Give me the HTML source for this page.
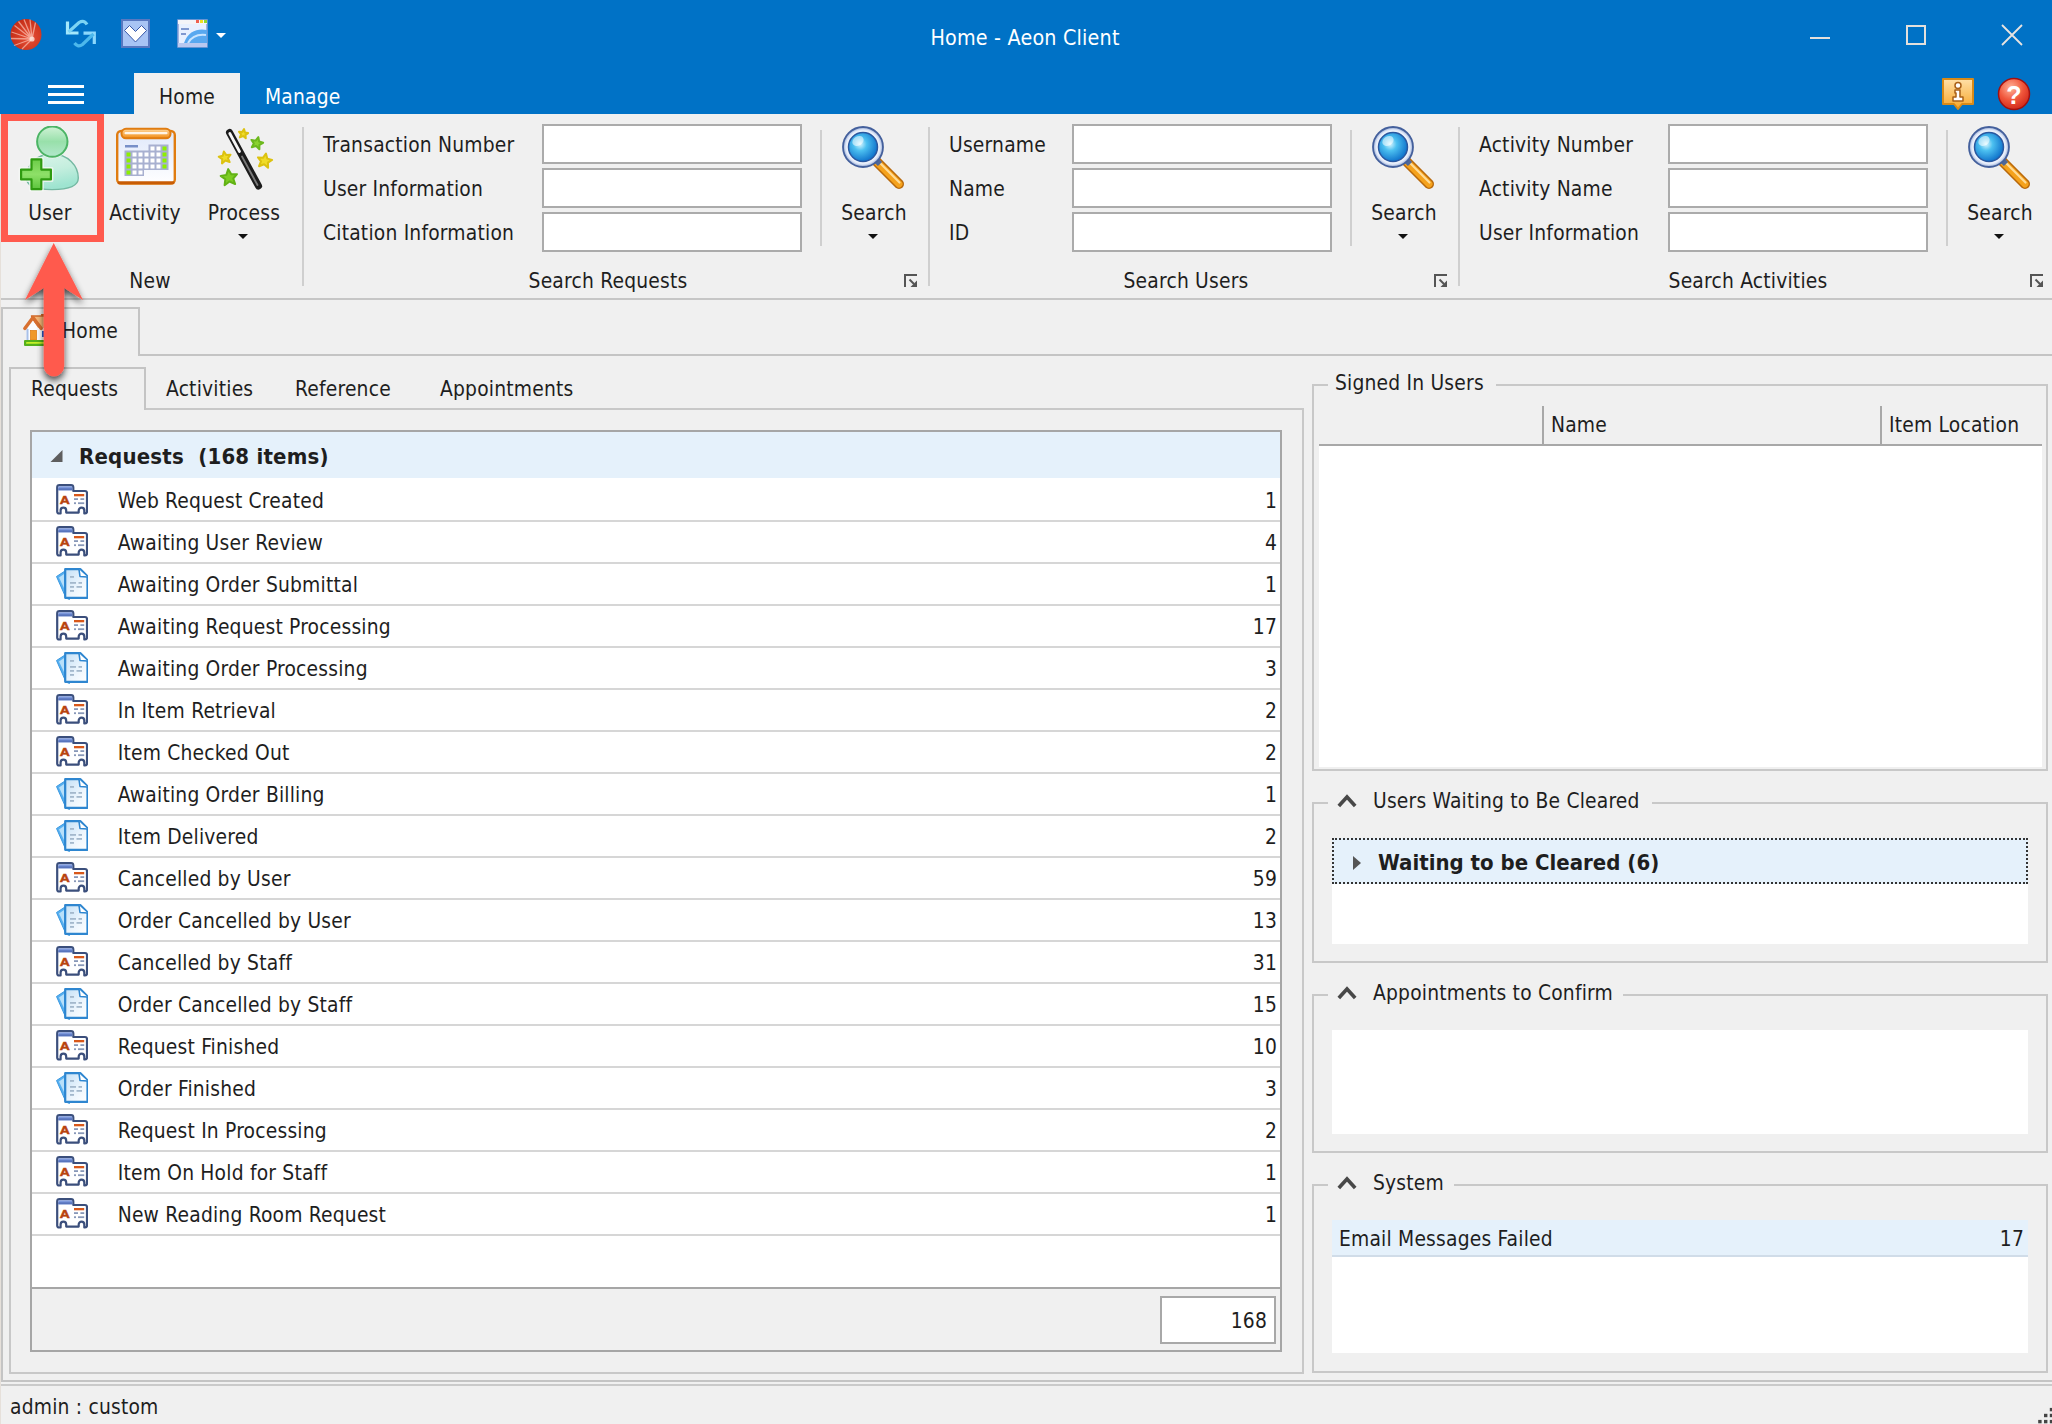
<!DOCTYPE html>
<html lang="en"><head><meta charset="utf-8"><title>Home - Aeon Client</title>
<style>
*{box-sizing:border-box}
html,body{margin:0;padding:0}
body{width:2052px;height:1424px;overflow:hidden;position:relative;background:#f0f0f0;font-family:"DejaVu Sans Condensed","DejaVu Sans","Liberation Sans",sans-serif;font-stretch:condensed;font-size:20.8px;letter-spacing:0.2px;color:#1e1e1e}
.a{position:absolute}
.t{position:absolute;white-space:nowrap;line-height:28px;height:28px}
.c{transform:translateX(-50%)}
.w{color:#fff}
#titlebar{left:0;top:0;width:2052px;height:114px;background:#0072c6}
#hometab{left:134px;top:73px;width:106px;height:42px;background:#f0f0f0}
.vsep{position:absolute;width:2px;background:#cfcfcf}
.inp{position:absolute;height:40px;width:260px;background:#fff;border:2px solid #ababab}
.hl{position:absolute;height:2px;background:#c4c4c4}
.dd{position:absolute;width:0;height:0;border-left:5px solid transparent;border-right:5px solid transparent;border-top:5px solid #111}
.row{position:absolute;left:32px;width:1248px;height:42px;background:#fff;border-bottom:2px solid #d6d6d6}
.row .ri{position:absolute;left:24px;top:4px}
.row .rn{position:absolute;left:85.700px;top:7px;line-height:28px;white-space:nowrap}
.row .rc{position:absolute;right:3px;top:7px;line-height:28px}
.frame{position:absolute;border:2px solid #c8c8c8}
.flabel{position:absolute;background:#f0f0f0;white-space:nowrap;line-height:28px;height:28px}
.white{position:absolute;background:#fff}

</style></head>
<body>
<svg width="0" height="0" style="position:absolute">
<defs>
<linearGradient id="gHead" x1="0" y1="0" x2="0" y2="1"><stop offset="0" stop-color="#d0f2d6"/><stop offset="0.5" stop-color="#98e0aa"/><stop offset="1" stop-color="#b2e8cc"/></linearGradient>
<linearGradient id="gBody" x1="0" y1="0" x2="0.300" y2="1"><stop offset="0" stop-color="#dcf5ea"/><stop offset="0.55" stop-color="#c4eede"/><stop offset="1" stop-color="#9ee4d0"/></linearGradient>
<linearGradient id="gPlus" x1="0" y1="0" x2="0" y2="1"><stop offset="0" stop-color="#6ccc48"/><stop offset="0.5" stop-color="#8ee068"/><stop offset="1" stop-color="#5cc43c"/></linearGradient>
<linearGradient id="gCalTop" x1="0" y1="0" x2="0" y2="1"><stop offset="0" stop-color="#ffd9a0"/><stop offset="1" stop-color="#f28c14"/></linearGradient>
<linearGradient id="gCalBody" x1="0" y1="0" x2="0" y2="1"><stop offset="0" stop-color="#dfe8fb"/><stop offset="1" stop-color="#ffffff"/></linearGradient>
<radialGradient id="gLens" cx="0.4" cy="0.4" r="0.65"><stop offset="0" stop-color="#d8f6ff"/><stop offset="0.35" stop-color="#4cc0f0"/><stop offset="1" stop-color="#0a6cc8"/></radialGradient>
<linearGradient id="gHandle" x1="0" y1="0" x2="0" y2="1"><stop offset="0" stop-color="#ffe0a0"/><stop offset="0.5" stop-color="#f5a21c"/><stop offset="1" stop-color="#c8720a"/></linearGradient>
<radialGradient id="gHelp" cx="0.4" cy="0.3" r="0.8"><stop offset="0" stop-color="#ffb49a"/><stop offset="0.5" stop-color="#f0553a"/><stop offset="1" stop-color="#c81e14"/></radialGradient>
<linearGradient id="gInfo" x1="0" y1="0" x2="0" y2="1"><stop offset="0" stop-color="#ffe0a8"/><stop offset="1" stop-color="#f6a62a"/></linearGradient>
<radialGradient id="gApp" cx="0.6" cy="0.6" r="0.7"><stop offset="0" stop-color="#e85038"/><stop offset="1" stop-color="#c02812"/></radialGradient>
<linearGradient id="gDoc" x1="0" y1="0" x2="1" y2="1"><stop offset="0" stop-color="#c4e0f6"/><stop offset="0.6" stop-color="#eef6fd"/><stop offset="1" stop-color="#ffffff"/></linearGradient>
<radialGradient id="gRim" cx="0.5" cy="0.5" r="0.5"><stop offset="0.700" stop-color="#ffffff"/><stop offset="0.860" stop-color="#e0e8f8"/><stop offset="1" stop-color="#8ea4d0"/></radialGradient>
<g id="ic-mag">
  <path d="M36 35L59 58" stroke="#b8680a" stroke-width="10" stroke-linecap="round"/>
  <path d="M37 36L59 58" stroke="#f5a21c" stroke-width="7" stroke-linecap="round"/>
  <path d="M38 35L59.500 56.500" stroke="#ffdc98" stroke-width="2.200" stroke-linecap="round"/>
  <path d="M33 31L40 38" stroke="#506898" stroke-width="6"/>
  <circle cx="23" cy="21" r="20" fill="url(#gRim)" stroke="#44609c" stroke-width="1.800"/>
  <circle cx="23" cy="21" r="14.500" fill="url(#gLens)" stroke="#2a58a0" stroke-width="1.500"/>
  <ellipse cx="18" cy="15" rx="6" ry="4.500" fill="#fff" opacity="0.55" transform="rotate(-30 18 15)"/>
</g>
<g id="ic-launch">
  <path d="M1 13V1H13" fill="none" stroke="#555" stroke-width="2"/>
  <path d="M5.500 5.500L10 10" fill="none" stroke="#555" stroke-width="2"/><path d="M13 6.500V13H6.500z" fill="#555"/>
</g>
<g id="ic-r">
  <path d="M1.200 3.500a2.300 2.300 0 0 1 2.300-2.300H15a2.300 2.300 0 0 1 2.300 2.300V7H29a2 2 0 0 1 2 2V27.500a2 2 0 0 1-2 2h-.700V26.500a2.800 2.800 0 0 0-5.600 0V28.600H10.200V26.500a2.800 2.800 0 0 0-5.600 0V29.500H3.200a2 2 0 0 1-2-2z" fill="#fff" stroke="#3b4f7c" stroke-width="2.200" stroke-linejoin="round"/>
  <rect x="2.300" y="2.300" width="14" height="4" fill="#7c98dc"/>
  <rect x="2.300" y="4.300" width="14" height="2" fill="#5874bc"/>
  <text x="0" y="0" transform="translate(3.800 20) scale(1.180 1)" font-family="Liberation Sans, sans-serif" font-weight="bold" font-size="11.800" fill="#b8420e" stroke="#b8420e" stroke-width="0.500">A</text>
  <rect x="18" y="10" width="10.200" height="2.300" fill="#d8581a"/>
  <rect x="18" y="14.200" width="4" height="1.800" fill="#8898b8"/><rect x="24.400" y="14.200" width="3.800" height="1.800" fill="#8898b8"/>
  <rect x="18" y="18.300" width="2" height="1.800" fill="#8898b8"/><rect x="22" y="18.300" width="6.200" height="1.800" fill="#8898b8"/>
</g>
<g id="ic-o">
  <path d="M0.500 8.500L9 3V24L13.500 31.500L10 30z" fill="#58b0f0" stroke="#3a98e0" stroke-width="1" stroke-linejoin="round"/>
  <path d="M3 9.500L8 6V20z" fill="#b8e0fa"/>
  <path d="M9.200 1.200H24.500L31.500 8.200V29.800H9.200z" fill="url(#gDoc)" stroke="#2e86d0" stroke-width="2.200" stroke-linejoin="round"/>
  <path d="M23 1.500L24 8.500L31.500 9" fill="#fff" stroke="#2e86d0" stroke-width="1.600" stroke-linejoin="round"/>
  <g fill="#a4b8cc"><rect x="14" y="8" width="4" height="1.800"/><rect x="14" y="14" width="6" height="1.800"/><rect x="22.500" y="14" width="3.500" height="1.800"/><rect x="14" y="18" width="4" height="1.800"/><rect x="20.500" y="18" width="5.500" height="1.800"/><rect x="14" y="22" width="4" height="1.800"/></g>
</g>
<g id="ic-chev"><path d="M1.800 13L10 4L18.200 13" fill="none" stroke="#484848" stroke-width="3.600"/></g>
</defs>
</svg>
<div id="titlebar" class="a"></div>
<!-- quick access icons -->
<svg class="a" style="left:8px;top:16px" width="220" height="38" viewBox="0 0 220 38">
  <circle cx="18" cy="18.500" r="15.500" fill="url(#gApp)"/>
  <g stroke="#ffd8cc" stroke-width="1.300" fill="none" opacity="0.600">
    <path d="M24 23L6.500 9.500M24 23L10.500 5.500M24 23L16 3.500M24 23L22 3.500M24 23L27.500 6.500M24 23L3.500 16M24 23L3 22.500M24 23L6 29.500M24 23L14 33"/>
  </g>
  <circle cx="24" cy="23" r="2.600" fill="#ffe8e0" opacity="0.800"/>
  <g fill="none" stroke-linecap="butt" stroke-linejoin="miter">
    <path d="M59.500 5.500V17H70.500" stroke="#a4e8fc" stroke-width="3.200"/>
    <path d="M60.500 16L71 6.500Q76 3.500 79 8.500" stroke="#7cd4f4" stroke-width="3.200"/>
    <path d="M75.500 17.200H86.300V28" stroke="#8cd8fc" stroke-width="3.200"/>
    <path d="M85.500 18L74.500 28.500Q70 32 66.500 27" stroke="#4cb8ec" stroke-width="3.200"/>
  </g>
  <rect x="114" y="4" width="27" height="27" fill="#a8c4f4" stroke="#5878c0" stroke-width="2"/>
  <path d="M116.500 14.500l5-5 6 6 6-6 5 5-11 11.500z" fill="#fff" stroke="#3858a8" stroke-width="1"/>
  <rect x="170" y="4" width="29" height="27" fill="#e8f0ff" stroke="#88a0d8" stroke-width="1.5"/>
  <rect x="170" y="4" width="29" height="4" fill="#f4f4f8"/>
  <rect x="188" y="4" width="3" height="3" fill="#f06050"/><rect x="192" y="4" width="3" height="3" fill="#f0e020"/><rect x="196" y="4" width="3" height="3" fill="#90d830"/>
  <path d="M176 27c4-12 14-15 23-13v13z" fill="#58a8f0"/>
  <path d="M180 27c4-7 10-9 18-8" fill="none" stroke="#c8e4ff" stroke-width="2"/>
  <rect x="173" y="12" width="8" height="2" fill="#8098d0"/><rect x="173" y="17" width="5" height="2" fill="#8098d0"/>
  <rect x="170" y="27" width="29" height="4" fill="#b8c8f0"/>
  <path d="M208 17h10l-5 5z" fill="#fff"/>
</svg>
<div class="t w c" style="left:1025px;top:23.500px;font-size:21.300px">Home - Aeon Client</div>
<!-- window buttons -->
<div class="a" style="left:1810px;top:37px;width:20px;height:2px;background:#e4e0dc"></div>
<div class="a" style="left:1906px;top:25px;width:20px;height:20px;border:2px solid #e4e0dc"></div>
<svg class="a" style="left:2001px;top:24px" width="22" height="22" viewBox="0 0 22 22"><path d="M1 1L21 21M21 1L1 21" stroke="#e8e4e0" stroke-width="1.8" fill="none"/></svg>
<!-- ribbon tabs -->
<div class="a" style="left:48px;top:85px;width:36px;height:3px;background:#fff"></div>
<div class="a" style="left:48px;top:93px;width:36px;height:3px;background:#fff"></div>
<div class="a" style="left:48px;top:101px;width:36px;height:3px;background:#fff"></div>
<div id="hometab" class="a"></div>
<div class="t" style="left:159px;top:83px">Home</div>
<div class="t w" style="left:265px;top:83px">Manage</div>
<!-- info + help -->
<svg class="a" style="left:1941px;top:77px" width="34" height="34" viewBox="0 0 34 34">
  <path d="M2 2h30v25H21l-4 5-4-5H2z" fill="url(#gInfo)" stroke="#d88a18" stroke-width="2" stroke-linejoin="round"/>
  <circle cx="17" cy="8.500" r="3" fill="#fff" stroke="#a86018" stroke-width="1.5"/>
  <path d="M14 13h5v7h3v4H12v-4h3v-4h-1z" fill="#fff" stroke="#a86018" stroke-width="1.5" stroke-linejoin="round"/>
</svg>
<svg class="a" style="left:1997px;top:77px" width="34" height="34" viewBox="0 0 34 34">
  <circle cx="17" cy="17" r="15.500" fill="url(#gHelp)" stroke="#a01010" stroke-width="1.5"/>
  <text x="17" y="26.500" text-anchor="middle" font-family="Liberation Sans, sans-serif" font-weight="bold" font-size="25" fill="#fff">?</text>
</svg>
<!-- ribbon body -->
<div class="hl" style="left:0;top:298px;width:2052px;background:#c6c6c6"></div>
<div class="vsep" style="left:302px;top:127px;height:159px"></div>
<div class="vsep" style="left:928px;top:127px;height:159px"></div>
<div class="vsep" style="left:1458px;top:127px;height:159px"></div>
<div class="vsep" style="left:820px;top:130px;height:116px"></div>
<div class="vsep" style="left:1350px;top:130px;height:116px"></div>
<div class="vsep" style="left:1946px;top:130px;height:116px"></div>
<!-- New group icons -->
<svg class="a" style="left:18px;top:126px" width="64" height="66" viewBox="0 0 64 66">
  <path d="M8.500 52C8.500 38 19 28 34 28C50 28 60.300 40 60.300 52C60.300 59.500 52 63.600 34 63.600C16 63.600 8.500 59.500 8.500 52Z" fill="url(#gBody)" stroke="#74b8a2" stroke-width="1.400"/>
  <circle cx="34.300" cy="15.600" r="16.800" fill="#f4f8f4" opacity="0.8"/>
  <circle cx="34.300" cy="15.600" r="15.200" fill="url(#gHead)" stroke="#4cb465" stroke-width="2"/>
  <path d="M12.500 32.400H24.300V42.600H33.900V54.400H24.300V64.200H12.500V54.400H2.100V42.600H12.500Z" fill="#f4f8f4" stroke="#f4f8f4" stroke-width="3" stroke-linejoin="round" opacity="0.8"/>
  <path d="M13.500 33.400H23.300V43.600H32.900V53.400H23.300V63.200H13.500V53.400H3.100V43.600H13.500Z" fill="url(#gPlus)" stroke="#2f9a10" stroke-width="2.200" stroke-linejoin="round"/>
</svg>
<svg class="a" style="left:114px;top:126px" width="64" height="64" viewBox="0 0 64 64">
  <rect x="3.200" y="5" width="57.600" height="52.500" rx="4" fill="url(#gCalBody)" stroke="#e07c10" stroke-width="2.400"/>
  <path d="M5 56.800H59" stroke="#c85c04" stroke-width="3" stroke-linecap="round"/>
  <rect x="7.500" y="2.800" width="49" height="9.500" rx="4.500" fill="url(#gCalTop)" stroke="#e07c10" stroke-width="2"/>
  <rect x="10.500" y="6" width="43" height="2.200" rx="1" fill="#fff" opacity="0.85"/>
  <rect x="11" y="19" width="13" height="2.500" fill="#7890c8"/>
  <path d="M10.500 24.500h24v-6h20v25.500H30v6H10.500z" fill="#a8b0d0"/>
  <g fill="#fff">
    <rect x="36.500" y="20.500" width="4" height="4"/><rect x="42.500" y="20.500" width="4" height="4"/>
    <rect x="18.500" y="26.500" width="4" height="4"/><rect x="24.500" y="26.500" width="4" height="4"/><rect x="30.500" y="26.500" width="4" height="4"/><rect x="36.500" y="26.500" width="4" height="4"/><rect x="42.500" y="26.500" width="4" height="4"/>
    <rect x="18.500" y="32.500" width="4" height="4"/><rect x="24.500" y="32.500" width="4" height="4"/><rect x="30.500" y="32.500" width="4" height="4"/><rect x="36.500" y="32.500" width="4" height="4"/><rect x="42.500" y="32.500" width="4" height="4"/>
    <rect x="18.500" y="38.500" width="4" height="4"/><rect x="24.500" y="38.500" width="4" height="4"/><rect x="30.500" y="38.500" width="4" height="4"/><rect x="36.500" y="38.500" width="4" height="4"/><rect x="42.500" y="38.500" width="4" height="4"/>
    <rect x="18.500" y="44.500" width="4" height="4"/><rect x="24.500" y="44.500" width="4" height="4"/>
  </g>
  <g fill="#8cf000">
    <rect x="48.500" y="20.500" width="4" height="4"/><rect x="48.500" y="26.500" width="4" height="4"/><rect x="48.500" y="32.500" width="4" height="4"/><rect x="48.500" y="38.500" width="4" height="4"/>
    <rect x="12.500" y="26.500" width="4" height="4"/><rect x="12.500" y="32.500" width="4" height="4"/><rect x="12.500" y="38.500" width="4" height="4"/><rect x="12.500" y="44.500" width="4" height="4"/>
  </g>
</svg>
<svg class="a" style="left:212px;top:126px" width="64" height="66" viewBox="0 0 64 66">
  <path d="M17.500 6.500L46.500 60" stroke="#1c1c1c" stroke-width="7" stroke-linecap="round"/>
  <path d="M17.800 7.500L27.500 25.500" stroke="#f6f6f6" stroke-width="2.800" stroke-linecap="round"/>
  <path d="M30 30.500L45.500 59" stroke="#7a7a7a" stroke-width="1.800" stroke-linecap="round"/>
  <g stroke-linejoin="round" stroke-width="2">
  <path d="M0-4.600L1.400-1.500 4.600-1.300 2.200 0.900 3 4.200 0 2.400-3 4.200-2.200 0.900-4.600-1.300-1.400-1.500z" transform="translate(31.400 7.700) rotate(8)" fill="#f0dc28" stroke="#dcc210"/>
  <path d="M0-6L1.800-2 6-1.700 2.900 1.200 3.900 5.400 0 3.100-3.900 5.400-2.900 1.200-6-1.700-1.800-2z" transform="translate(44.900 17) rotate(14)" fill="#8ad22e" stroke="#6cb81c"/>
  <path d="M0-6L1.800-2 6-1.700 2.900 1.200 3.900 5.400 0 3.100-3.900 5.400-2.900 1.200-6-1.700-1.800-2z" transform="translate(12.900 31.400) rotate(-10)" fill="#f0dc28" stroke="#dcc210"/>
  <path d="M0-7.200L2.200-2.400 7.200-2 3.500 1.400 4.600 6.500 0 3.700-4.600 6.500-3.500 1.400-7.200-2-2.200-2.400z" transform="translate(52.700 34.600) rotate(10)" fill="#f0dc28" stroke="#dcc210"/>
  <path d="M0-8.200L2.500-2.700 8.200-2.300 4 1.600 5.300 7.400 0 4.200-5.300 7.400-4 1.600-8.200-2.300-2.500-2.700z" transform="translate(17.100 51.300) rotate(-6)" fill="#7ccc22" stroke="#62b214"/>
  </g>
</svg>
<div class="t c" style="left:50px;top:199px">User</div>
<div class="t c" style="left:145px;top:199px">Activity</div>
<div class="t c" style="left:244px;top:199px">Process</div>
<div class="dd" style="left:238px;top:234px"></div>
<div class="t c" style="left:150px;top:267px">New</div>
<!-- Search Requests -->
<div class="t" style="left:323px;top:131px">Transaction Number</div>
<div class="t" style="left:323px;top:175px">User Information</div>
<div class="t" style="left:323px;top:219px">Citation Information</div>
<div class="inp" style="left:542px;top:124px"></div>
<div class="inp" style="left:542px;top:168px"></div>
<div class="inp" style="left:542px;top:212px"></div>
<svg class="a" style="left:840px;top:126px" width="66" height="66" viewBox="0 0 66 66"><use href="#ic-mag"/></svg>
<div class="t c" style="left:874px;top:199px">Search</div>
<div class="dd" style="left:868px;top:234px"></div>
<svg class="a" style="left:904px;top:274px" width="14" height="14" viewBox="0 0 14 14"><use href="#ic-launch"/></svg>
<div class="t c" style="left:608px;top:267px">Search Requests</div>
<!-- Search Users -->
<div class="t" style="left:949px;top:131px">Username</div>
<div class="t" style="left:949px;top:175px">Name</div>
<div class="t" style="left:949px;top:219px">ID</div>
<div class="inp" style="left:1072px;top:124px"></div>
<div class="inp" style="left:1072px;top:168px"></div>
<div class="inp" style="left:1072px;top:212px"></div>
<svg class="a" style="left:1370px;top:126px" width="66" height="66" viewBox="0 0 66 66"><use href="#ic-mag"/></svg>
<div class="t c" style="left:1404px;top:199px">Search</div>
<div class="dd" style="left:1398px;top:234px"></div>
<svg class="a" style="left:1434px;top:274px" width="14" height="14" viewBox="0 0 14 14"><use href="#ic-launch"/></svg>
<div class="t c" style="left:1186px;top:267px">Search Users</div>
<!-- Search Activities -->
<div class="t" style="left:1479px;top:131px">Activity Number</div>
<div class="t" style="left:1479px;top:175px">Activity Name</div>
<div class="t" style="left:1479px;top:219px">User Information</div>
<div class="inp" style="left:1668px;top:124px"></div>
<div class="inp" style="left:1668px;top:168px"></div>
<div class="inp" style="left:1668px;top:212px"></div>
<svg class="a" style="left:1966px;top:126px" width="66" height="66" viewBox="0 0 66 66"><use href="#ic-mag"/></svg>
<div class="t c" style="left:2000px;top:199px">Search</div>
<div class="dd" style="left:1994px;top:234px"></div>
<svg class="a" style="left:2030px;top:274px" width="14" height="14" viewBox="0 0 14 14"><use href="#ic-launch"/></svg>
<div class="t c" style="left:1748px;top:267px">Search Activities</div>
<!-- document tab -->
<div class="a" style="left:1px;top:307px;width:139px;height:49px;border:2px solid #c4c4c4;border-bottom:none"></div>
<div class="hl" style="left:138px;top:354px;width:1914px"></div>
<div class="a" style="left:1px;top:354px;width:2px;height:1026px;background:#c4c4c4"></div>
<svg class="a" style="left:22px;top:312px" width="38" height="36" viewBox="0 0 38 36">
  <rect x="19" y="2" width="3.500" height="4" fill="#d06828"/>
  <path d="M9.500 4H28L34.500 17H16Z" fill="#f6b878" stroke="#d06828" stroke-width="1.500" stroke-linejoin="round"/>
  <rect x="4.500" y="16" width="27.500" height="12.500" fill="#fbfdff"/>
  <rect x="4.500" y="16" width="2" height="12.500" fill="#a8c0e8"/><rect x="30" y="16" width="2" height="12.500" fill="#a8c0e8"/>
  <path d="M5 17L11 8.500L17 17Z" fill="#fbfdff"/>
  <path d="M2.800 16.500L11 5.500L19.200 16.500" fill="none" stroke="#d87030" stroke-width="3.400" stroke-linejoin="round" stroke-linecap="round"/>
  <rect x="8.500" y="18.500" width="6" height="9.500" fill="#f09828" stroke="#e08018" stroke-width="0.800"/>
  <rect x="20" y="19" width="6" height="6" fill="#2860d0"/>
  <rect x="2" y="28" width="32.500" height="6" rx="1" fill="#54b01c"/>
  <rect x="4" y="30" width="28" height="1.800" rx="0.900" fill="#c4f028"/>
</svg>
<div class="t" style="left:62px;top:317px">Home</div>
<!-- inner tab control -->
<div class="frame" style="left:9px;top:408px;width:1295px;height:966px"></div>
<div class="a" style="left:9px;top:367px;width:137px;height:43px;border:2px solid #c4c4c4;border-bottom:none;background:#f0f0f0"></div>
<div class="t" style="left:31px;top:375px">Requests</div>
<div class="t" style="left:166px;top:375px">Activities</div>
<div class="t" style="left:295px;top:375px">Reference</div>
<div class="t" style="left:440px;top:375px">Appointments</div>
<!-- grid -->
<div class="a" style="left:30px;top:430px;width:1252px;height:922px;border:2px solid #a6a6a6;background:#fff"></div>
<div class="a" style="left:32px;top:432px;width:1248px;height:46px;background:#e5f1fb"></div>
<svg class="a" style="left:50px;top:449px" width="14" height="14" viewBox="0 0 14 14"><path d="M12.500 1V13H0.500z" fill="#5e5e5e"/></svg>
<div class="t" style="left:79px;top:443px;font-weight:bold;font-size:22px">Requests&nbsp; (168 items)</div>
<div class="a" style="left:32px;top:1287px;width:1248px;height:63px;background:#f0f0f0;border-top:2px solid #a6a6a6"></div>
<div class="a" style="left:1160px;top:1296px;width:116px;height:48px;background:#fff;border:2px solid #a8a8a8"></div>
<div class="t" style="left:1160px;width:107px;top:1307px;text-align:right">168</div>
<div class="row" style="top:480px"><svg class="ri" width="32" height="32" viewBox="0 0 32 32"><use href="#ic-r"/></svg><span class="rn">Web Request Created</span><span class="rc">1</span></div>
<div class="row" style="top:522px"><svg class="ri" width="32" height="32" viewBox="0 0 32 32"><use href="#ic-r"/></svg><span class="rn">Awaiting User Review</span><span class="rc">4</span></div>
<div class="row" style="top:564px"><svg class="ri" width="32" height="32" viewBox="0 0 32 32"><use href="#ic-o"/></svg><span class="rn">Awaiting Order Submittal</span><span class="rc">1</span></div>
<div class="row" style="top:606px"><svg class="ri" width="32" height="32" viewBox="0 0 32 32"><use href="#ic-r"/></svg><span class="rn">Awaiting Request Processing</span><span class="rc">17</span></div>
<div class="row" style="top:648px"><svg class="ri" width="32" height="32" viewBox="0 0 32 32"><use href="#ic-o"/></svg><span class="rn">Awaiting Order Processing</span><span class="rc">3</span></div>
<div class="row" style="top:690px"><svg class="ri" width="32" height="32" viewBox="0 0 32 32"><use href="#ic-r"/></svg><span class="rn">In Item Retrieval</span><span class="rc">2</span></div>
<div class="row" style="top:732px"><svg class="ri" width="32" height="32" viewBox="0 0 32 32"><use href="#ic-r"/></svg><span class="rn">Item Checked Out</span><span class="rc">2</span></div>
<div class="row" style="top:774px"><svg class="ri" width="32" height="32" viewBox="0 0 32 32"><use href="#ic-o"/></svg><span class="rn">Awaiting Order Billing</span><span class="rc">1</span></div>
<div class="row" style="top:816px"><svg class="ri" width="32" height="32" viewBox="0 0 32 32"><use href="#ic-o"/></svg><span class="rn">Item Delivered</span><span class="rc">2</span></div>
<div class="row" style="top:858px"><svg class="ri" width="32" height="32" viewBox="0 0 32 32"><use href="#ic-r"/></svg><span class="rn">Cancelled by User</span><span class="rc">59</span></div>
<div class="row" style="top:900px"><svg class="ri" width="32" height="32" viewBox="0 0 32 32"><use href="#ic-o"/></svg><span class="rn">Order Cancelled by User</span><span class="rc">13</span></div>
<div class="row" style="top:942px"><svg class="ri" width="32" height="32" viewBox="0 0 32 32"><use href="#ic-r"/></svg><span class="rn">Cancelled by Staff</span><span class="rc">31</span></div>
<div class="row" style="top:984px"><svg class="ri" width="32" height="32" viewBox="0 0 32 32"><use href="#ic-o"/></svg><span class="rn">Order Cancelled by Staff</span><span class="rc">15</span></div>
<div class="row" style="top:1026px"><svg class="ri" width="32" height="32" viewBox="0 0 32 32"><use href="#ic-r"/></svg><span class="rn">Request Finished</span><span class="rc">10</span></div>
<div class="row" style="top:1068px"><svg class="ri" width="32" height="32" viewBox="0 0 32 32"><use href="#ic-o"/></svg><span class="rn">Order Finished</span><span class="rc">3</span></div>
<div class="row" style="top:1110px"><svg class="ri" width="32" height="32" viewBox="0 0 32 32"><use href="#ic-r"/></svg><span class="rn">Request In Processing</span><span class="rc">2</span></div>
<div class="row" style="top:1152px"><svg class="ri" width="32" height="32" viewBox="0 0 32 32"><use href="#ic-r"/></svg><span class="rn">Item On Hold for Staff</span><span class="rc">1</span></div>
<div class="row" style="top:1194px"><svg class="ri" width="32" height="32" viewBox="0 0 32 32"><use href="#ic-r"/></svg><span class="rn">New Reading Room Request</span><span class="rc">1</span></div>
<!-- Signed In Users -->
<div class="frame" style="left:1312px;top:384px;width:736px;height:387px"></div>
<div class="flabel" style="left:1328px;top:369px;width:168px;padding-left:7px">Signed In Users</div>
<div class="white" style="left:1319px;top:446px;width:723px;height:321px"></div>
<div class="hl" style="left:1319px;top:444px;width:723px;background:#a8a8a8"></div>
<div class="vsep" style="left:1542px;top:406px;height:39px;background:#a8a8a8"></div>
<div class="vsep" style="left:1880px;top:406px;height:39px;background:#a8a8a8"></div>
<div class="t" style="left:1551px;top:411px">Name</div>
<div class="t" style="left:1889px;top:411px">Item Location</div>
<!-- Users Waiting -->
<div class="frame" style="left:1312px;top:802px;width:736px;height:161px"></div>
<div class="flabel" style="left:1328px;top:787px;width:324px"></div>
<svg class="a" style="left:1337px;top:793px" width="20" height="16" viewBox="0 0 20 16"><use href="#ic-chev"/></svg>
<div class="t" style="left:1373px;top:787px">Users Waiting to Be Cleared</div>
<div class="white" style="left:1332px;top:838px;width:696px;height:106px"></div>
<div class="a" style="left:1332px;top:838px;width:696px;height:46px;background:#e5f1fb;border:2px dotted #333"></div>
<svg class="a" style="left:1351.500px;top:855px" width="10" height="16" viewBox="0 0 10 16"><path d="M1 1L9 8L1 15z" fill="#555"/></svg>
<div class="t" style="left:1378px;top:849px;font-weight:bold;font-size:22px;letter-spacing:0">Waiting to be Cleared (6)</div>
<!-- Appointments -->
<div class="frame" style="left:1312px;top:994px;width:736px;height:159px"></div>
<div class="flabel" style="left:1328px;top:979px;width:295px"></div>
<svg class="a" style="left:1337px;top:985px" width="20" height="16" viewBox="0 0 20 16"><use href="#ic-chev"/></svg>
<div class="t" style="left:1373px;top:979px">Appointments to Confirm</div>
<div class="white" style="left:1332px;top:1030px;width:696px;height:104px"></div>
<!-- System -->
<div class="frame" style="left:1312px;top:1184px;width:736px;height:189px"></div>
<div class="flabel" style="left:1328px;top:1169px;width:126px"></div>
<svg class="a" style="left:1337px;top:1175px" width="20" height="16" viewBox="0 0 20 16"><use href="#ic-chev"/></svg>
<div class="t" style="left:1373px;top:1169px">System</div>
<div class="white" style="left:1332px;top:1220px;width:696px;height:133px"></div>
<div class="a" style="left:1332px;top:1220px;width:696px;height:37px;background:#e5f1fb;border-bottom:2px solid #d0dce8"></div>
<div class="t" style="left:1339px;top:1225px">Email Messages Failed</div>
<div class="t" style="left:1900px;width:124px;top:1225px;text-align:right">17</div>
<!-- status bar -->
<div class="hl" style="left:0;top:1380px;width:2052px"></div>
<div class="hl" style="left:0;top:1384px;width:2052px;background:#cacaca"></div>
<div class="t" style="left:10px;top:1393px">admin : custom</div>
<svg class="a" style="left:2034px;top:1404px" width="18" height="20" viewBox="0 0 18 20">
  <g fill="#444"><rect x="15.800" y="3.900" width="3.400" height="3.400"/><rect x="10" y="9.800" width="3.400" height="3.400"/><rect x="15.800" y="9.800" width="3.400" height="3.400"/><rect x="4.200" y="15.900" width="3.400" height="3.400"/><rect x="10" y="15.900" width="3.400" height="3.400"/><rect x="15.800" y="15.900" width="3.400" height="3.400"/></g>
</svg>
<div class="a" style="left:0;top:114px;width:1px;height:1310px;background:#e6e0da"></div>
<!-- annotation: red box + arrow -->
<div class="a" style="left:1px;top:114px;width:103px;height:128px;border:7px solid #ff5a4e"></div>
<svg class="a" style="left:10px;top:236px" width="90" height="150" viewBox="0 0 90 150">
  <defs><filter id="sh" x="-30%" y="-10%" width="160%" height="130%"><feGaussianBlur in="SourceAlpha" stdDeviation="3.500"/><feOffset dx="0" dy="4"/><feComponentTransfer><feFuncA type="linear" slope="0.700"/></feComponentTransfer><feMerge><feMergeNode/><feMergeNode in="SourceGraphic"/></feMerge></filter></defs>
  <path d="M43.700 7L73 64L54.200 52V130a10.200 10.200 0 0 1-20.500 0V52L15 64z" fill="#ff5a4e" filter="url(#sh)"/>
</svg>
</body></html>
